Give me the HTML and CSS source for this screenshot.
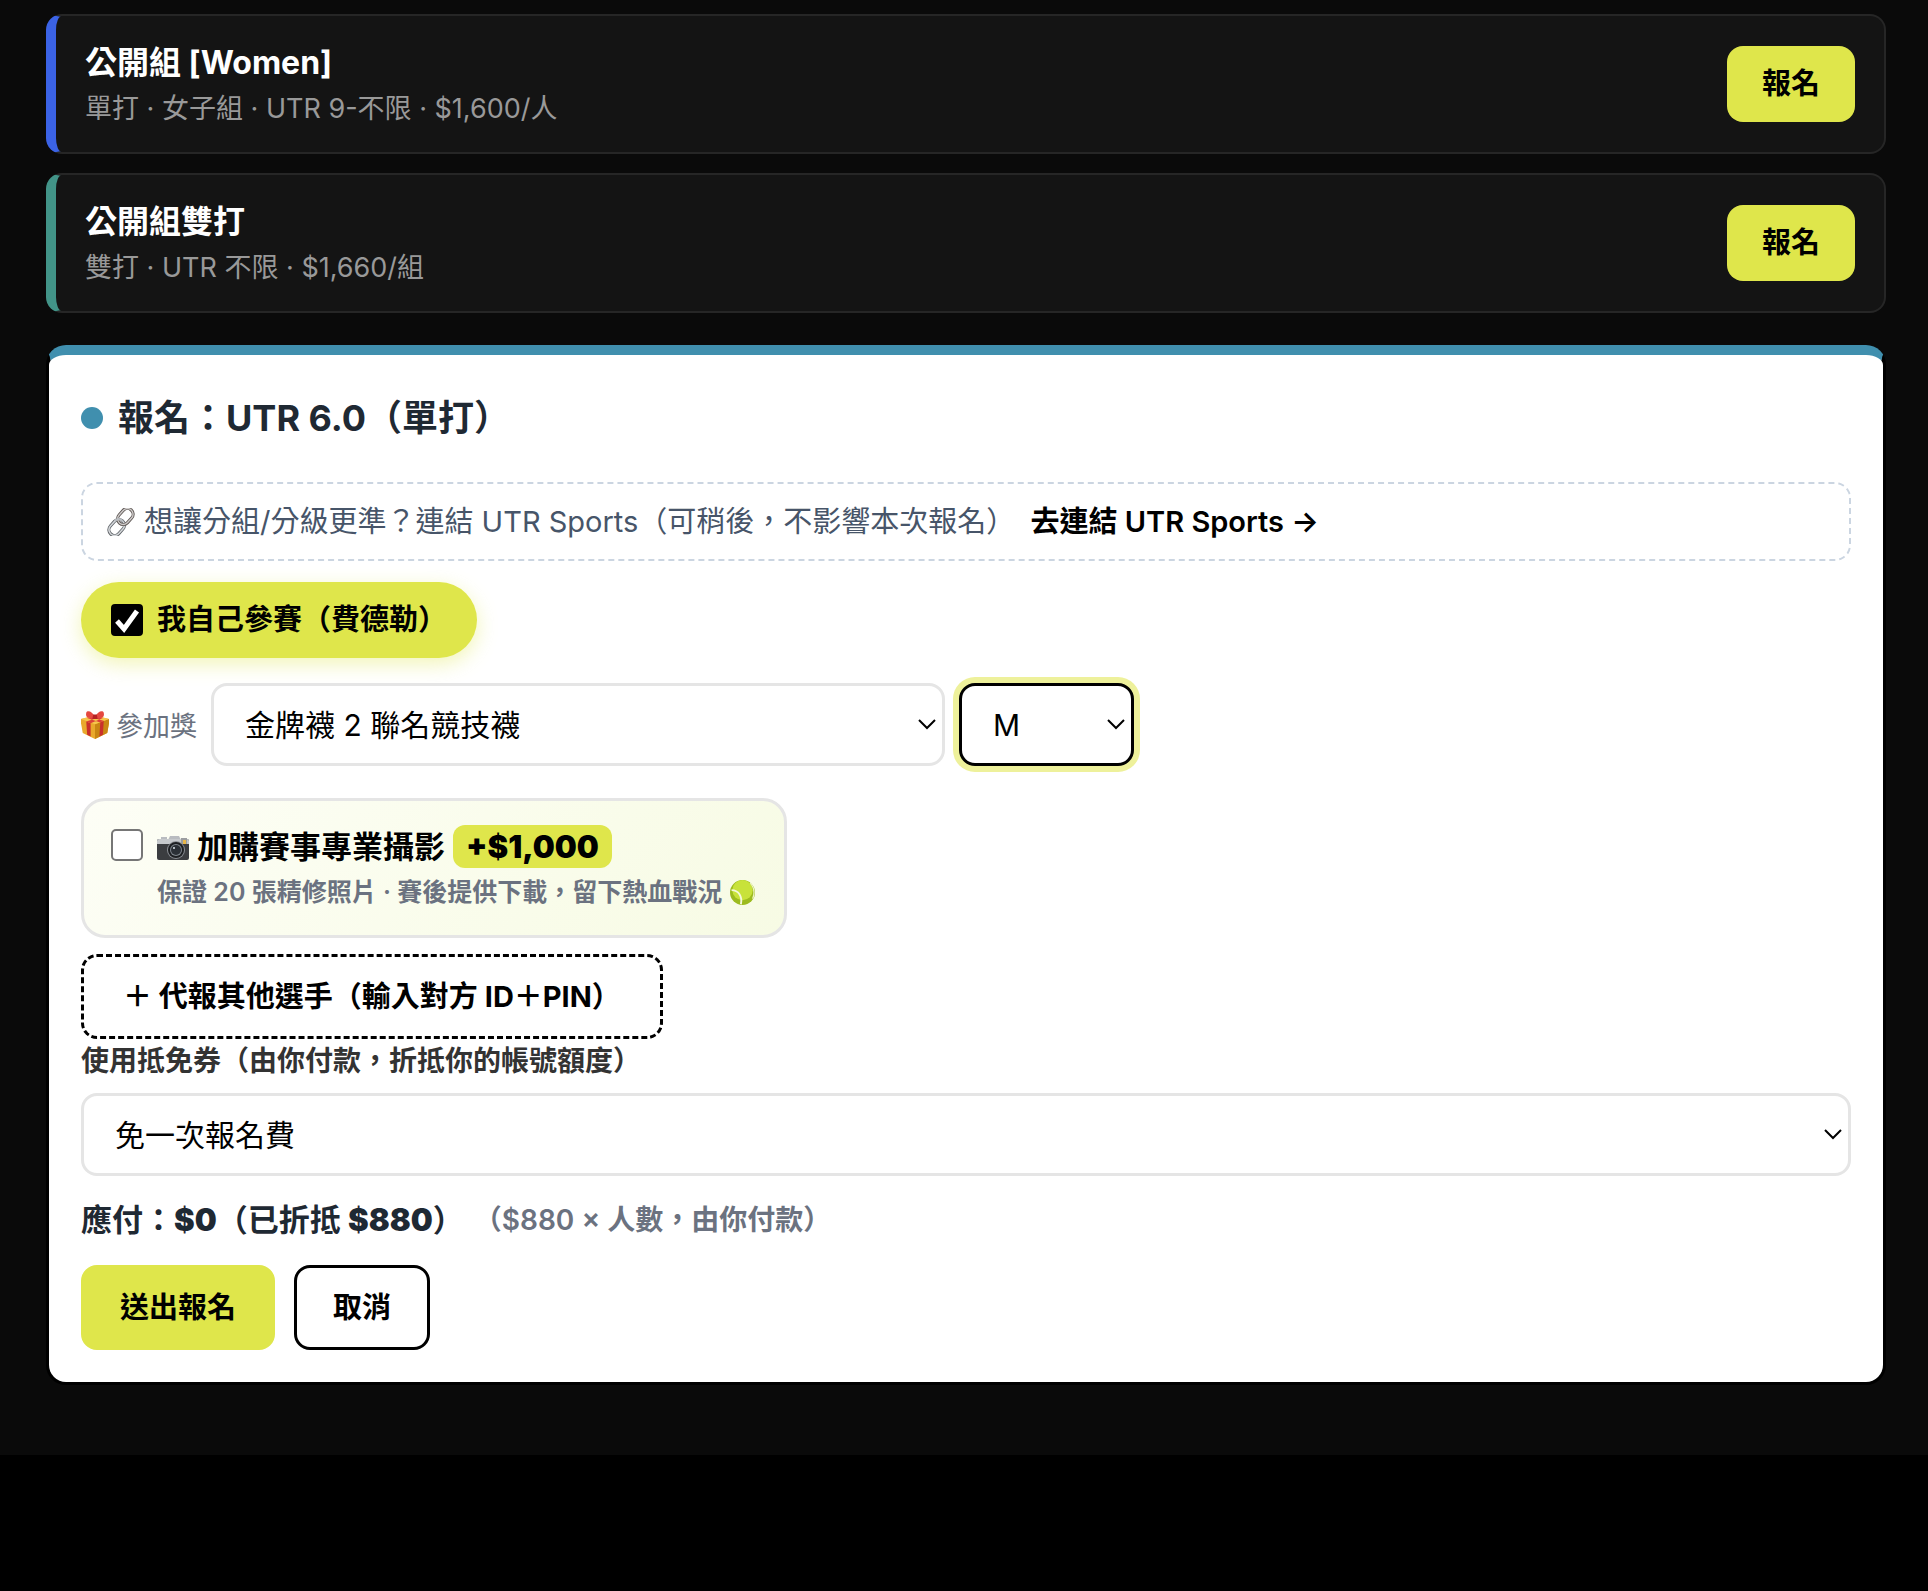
FILE: index.html
```html
<!DOCTYPE html>
<html lang="zh-Hant-TW">
    <head>
        <meta charset="UTF-8" />
        <meta name="viewport" content="width=device-width, initial-scale=1.0" />
        <title>賽事報名</title>
        <link rel="stylesheet" href="styles.css">
    </head>
    <body>
        <main class="page">
            <div class="division division-women">
                <div class="division-info">
                    <h3>公開組 [Women]</h3>
                    <p>單打 · 女子組 · UTR 9-不限 · $1,600/人</p>
                </div>
                <button type="button" class="btn btn-join">報名</button>
            </div>

            <div class="division division-doubles">
                <div class="division-info">
                    <h3>公開組雙打</h3>
                    <p>雙打 · UTR 不限 · $1,660/組</p>
                </div>
                <button type="button" class="btn btn-join">報名</button>
            </div>

            <form class="panel">
                <h2><span class="dot"></span>報名：UTR 6.0（單打）</h2>

                <div class="notice">
                    <svg class="emoji" viewBox="0 0 32 32" aria-hidden="true">
                        <g fill="none" transform="rotate(-48 16 16)">
                            <rect x="-2" y="10" width="20" height="13" rx="6.5" stroke="#5c6065" stroke-width="3.6" />
                            <rect x="-2" y="10" width="20" height="13" rx="6.5" stroke="#d5d8db" stroke-width="1.8" />
                            <rect x="14" y="9" width="20" height="13" rx="6.5" stroke="#5c5552" stroke-width="3.6" />
                            <rect x="14" y="9" width="20" height="13" rx="6.5" stroke="#cfcccb" stroke-width="1.6" />
                            <path d="M12 10c4 0 6 3 6 7" stroke="#b9bdc1" stroke-width="2.4" />
                        </g>
                    </svg>
                    <span>想讓分組/分級更準？連結 UTR Sports（可稍後，不影響本次報名）</span>
                    <a href="#utr">去連結 UTR Sports →</a>
                </div>

                <label class="self-entry">
                    <input type="checkbox" checked />
                    <span>我自己參賽（費德勒）</span>
                </label>

                <div class="gift-row">
                    <label for="gift">
                        <svg class="emoji" viewBox="0 0 32 32" aria-hidden="true">
                            <path d="M0 9l16-4 16 4v5l-2 11-14 7-14-7L0 14z" fill="#e9a92c" />
                            <path d="M16 15l16-6v5l-2 11-14 7z" fill="#c98613" />
                            <path d="M0 9l16-4 16 4-16 6z" fill="#f6c74d" />
                            <path d="M6 12l5 2v15l-4-2zM22 13l4-2-1 16-4 2z" fill="#c9302c" />
                            <path d="M6 12l15-5 4 1-14 6zM26 11L11 7 7 8l15 5z" fill="#dc4038" />
                            <path d="M16 7C13 0 7-1 6 2c-1 5 1 7 10 6 9 1 11-1 10-6-1-3-7-2-10 5z" fill="#e5483f" />
                            <path d="M14 4h4l1 5h-6z" fill="#b52222" />
                        </svg>
                        參加獎
                    </label>
                    <select id="gift" class="gift-select">
                        <option>金牌襪 2 聯名競技襪</option>
                    </select>
                    <select class="size-select is-focused" aria-label="尺寸">
                        <option>M</option>
                    </select>
                </div>

                <label class="addon">
                    <input type="checkbox" />
                    <span class="addon-text">
                        <span class="addon-title">
                            <svg class="emoji" viewBox="0 0 32 32" aria-hidden="true">
                                <path d="M4 6h6v3H4zM13 5h9l2 4H11z" fill="#b9bcc0" />
                                <rect x="0" y="8" width="32" height="21" rx="2" fill="#3b3d40" />
                                <path d="M0 13v-3q0-2 2-2h28q2 0 2 2v3z" fill="#c6c9cc" />
                                <rect x="24" y="7" width="6" height="6" fill="#9b9d9f" />
                                <rect x="26" y="9" width="3" height="4" fill="#e9b84a" />
                                <circle cx="19" cy="19" r="9" fill="#8b8f94" />
                                <circle cx="19" cy="19" r="8" fill="#1d1f22" />
                                <circle cx="19" cy="19" r="6" fill="#7f868d" />
                                <circle cx="19" cy="19" r="5" fill="#2b3036" />
                                <circle cx="17" cy="17" r="1" fill="#dfe7ee" />
                            </svg>
                            <span>加購賽事專業攝影</span>
                            <span class="price">+$1,000</span>
                        </span>
                        <span class="addon-desc">
                            保證 20 張精修照片 · 賽後提供下載，留下熱血戰況
                            <svg class="emoji" viewBox="0 0 32 32" aria-hidden="true">
                                <circle cx="16" cy="16" r="16" fill="#9cbb1e" />
                                <circle cx="16" cy="13" r="13" fill="#c8e23a" />
                                <path d="M2 13c9 0 14 8 12 18" fill="none" stroke="#f4f8dc" stroke-width="2.4" />
                                <path d="M26 4c5 6 6 13 3 20" fill="none" stroke="#eef4c4" stroke-width="1.6" />
                            </svg>
                        </span>
                    </span>
                </label>

                <button type="button" class="btn btn-proxy">＋ 代報其他選手（輸入對方 ID＋PIN）</button>

                <label class="field-label" for="coupon">使用抵免券（由你付款，折抵你的帳號額度）</label>
                <select id="coupon" class="coupon-select">
                    <option>免一次報名費</option>
                </select>

                <p class="total">
                    <strong>應付：<b>$0</b>（已折抵 <b>$880</b>）</strong>
                    <span>（$880 × 人數，由你付款）</span>
                </p>

                <div class="actions">
                    <button type="submit" class="btn btn-submit">送出報名</button>
                    <button type="button" class="btn btn-cancel">取消</button>
                </div>
            </form>
        </main>
    </body>
</html>
```
FILE: styles.css
```css
* {
    box-sizing: border-box;
}
body {
    margin: 0;
    background-color: #000;
    color: #000;
    font-family: Inter, "Noto Sans CJK TC", sans-serif;
    font-size: 29px;
}
h2,
h3,
p {
    margin: 0;
}
.page {
    background-color: #0a0a0a;
    padding: 14px 42px 70px 46px;
}
.btn {
    font-family: inherit;
    font-size: 29px;
    font-weight: 700;
    line-height: 40px;
    color: #000;
    border: none;
    border-radius: 16px;
    cursor: pointer;
}

/* division cards */
.division {
    display: flex;
    align-items: center;
    justify-content: space-between;
    margin-bottom: 19px;
    padding: 22px 29px;
    background-color: #141414;
    border: 2px solid #262626;
    border-left-width: 10px;
    border-radius: 16px;
}
.division-women {
    border-left-color: #3b63e6;
}
.division-doubles {
    border-left-color: #429488;
}
.division h3 {
    color: #fff;
    font-size: 32px;
    line-height: 50px;
}
.division p {
    color: #999;
    font-size: 27px;
    line-height: 42px;
}
.btn-join {
    padding: 18px 35px;
    background-color: #dfe64b;
}

/* registration panel */
.panel {
    display: flex;
    flex-direction: column;
    align-items: flex-start;
    margin-top: 32px;
    padding: 35px 32px 32px;
    background-color: #fff;
    border: 3px solid #000;
    border-top: 10px solid #408fae;
    border-radius: 20px;
}
.panel h2 {
    display: flex;
    align-items: center;
    gap: 15px;
    margin-bottom: 36px;
    color: #1f2933;
    font-size: 36px;
    line-height: 56px;
}
.dot {
    width: 22px;
    height: 22px;
    border-radius: 50%;
    background-color: #408fae;
}
.emoji {
    flex: none;
    width: 28px;
    height: 28px;
}
.notice {
    display: flex;
    align-items: center;
    gap: 9px;
    align-self: stretch;
    margin-bottom: 21px;
    padding: 17px 24px;
    border: 2px dashed #cbd5e1;
    border-radius: 16px;
    color: #475569;
    line-height: 41px;
}
.notice a {
    color: #000;
    font-weight: 600;
    text-decoration: none;
    margin-left: 6px;
}
input[type="checkbox"] {
    appearance: none;
    flex: none;
    width: 32px;
    height: 32px;
    margin: 0;
    border: 2px solid #767676;
    border-radius: 5px;
    background-color: #fff;
}
input[type="checkbox"]:checked {
    border-color: #000;
    border-radius: 4px;
    background: #000 url("data:image/svg+xml,%3Csvg xmlns='http://www.w3.org/2000/svg' viewBox='0 0 28 28'%3E%3Cpath d='M4 15l7 8L24 5' fill='none' stroke='white' stroke-width='5'/%3E%3C/svg%3E") center / 28px no-repeat;
}
.self-entry {
    display: flex;
    align-items: center;
    gap: 14px;
    margin-bottom: 25px;
    padding: 18px 30px;
    border-radius: 38px;
    background-color: #dfe64b;
    box-shadow: 0 6px 20px rgba(223, 230, 75, 0.4);
    font-weight: 700;
    line-height: 40px;
}
select {
    appearance: none;
    height: 83px;
    padding: 0 31px;
    border: 3px solid #e5e5e5;
    border-radius: 16px;
    background: #fff url("data:image/svg+xml,%3Csvg xmlns='http://www.w3.org/2000/svg' viewBox='0 0 18 12'%3E%3Cpath d='M1 1l8 8 8-8' fill='none' stroke='black' stroke-width='2'/%3E%3C/svg%3E") right 6px center / 18px 12px no-repeat;
    color: #000;
    font-family: inherit;
    font-size: 30px;
}
.gift-row {
    display: flex;
    align-items: center;
    gap: 14px;
    margin-bottom: 32px;
}
.gift-row label {
    display: flex;
    align-items: center;
    gap: 7px;
    color: #6b7280;
    font-size: 27px;
}
.gift-select {
    width: 734px;
}
.size-select {
    width: 175px;
}
.is-focused {
    border-color: #000;
    box-shadow: 0 0 0 6px #eef19b;
    outline: none;
}
.addon {
    display: flex;
    gap: 14px;
    margin-bottom: 16px;
    padding: 24px 29px 22px 27px;
    border: 3px solid #e5e5e5;
    border-radius: 24px;
    background: linear-gradient(135deg, #fdfef6, #f7fbe4);
}
.addon input {
    margin-top: 4px;
}
.addon-text,
.addon-title,
.addon-desc {
    display: flex;
}
.addon-text {
    flex-direction: column;
}
.addon-title {
    align-items: center;
    gap: 8px;
    font-size: 31px;
    font-weight: 700;
    line-height: 43px;
}
.addon-title .emoji {
    width: 32px;
    height: 32px;
}
.price {
    padding: 0 13px;
    border-radius: 12px;
    background-color: #dfe64b;
    font-weight: 900;
}
.addon-desc {
    align-items: center;
    gap: 8px;
    padding-top: 4px;
    color: #6b7280;
    font-size: 25px;
    font-weight: 600;
    line-height: 41px;
}
.addon-desc .emoji {
    width: 25px;
    height: 25px;
}
.btn-proxy {
    padding: 20px 39px;
    line-height: 39px;
    border: 3px dashed #000;
    background-color: #fff;
}
.field-label {
    margin-bottom: 10px;
    color: #333;
    font-size: 28px;
    font-weight: 600;
    line-height: 44px;
}
.coupon-select {
    align-self: stretch;
}
.total {
    display: flex;
    align-items: center;
    gap: 10px;
    margin: 22px 0 23px;
    line-height: 44px;
}
.total strong {
    color: #1f2933;
    font-size: 31px;
    font-weight: 700;
}
.total b {
    font-weight: 900;
}
.total span {
    color: #6b7280;
    font-size: 28px;
    font-weight: 600;
}
.actions {
    display: flex;
    gap: 19px;
}
.btn-submit,
.btn-cancel {
    padding: 20px 36px;
    line-height: 39px;
    border: 3px solid #dfe64b;
    background-color: #dfe64b;
}
.btn-cancel {
    border-color: #000;
    background-color: #fff;
}
```
